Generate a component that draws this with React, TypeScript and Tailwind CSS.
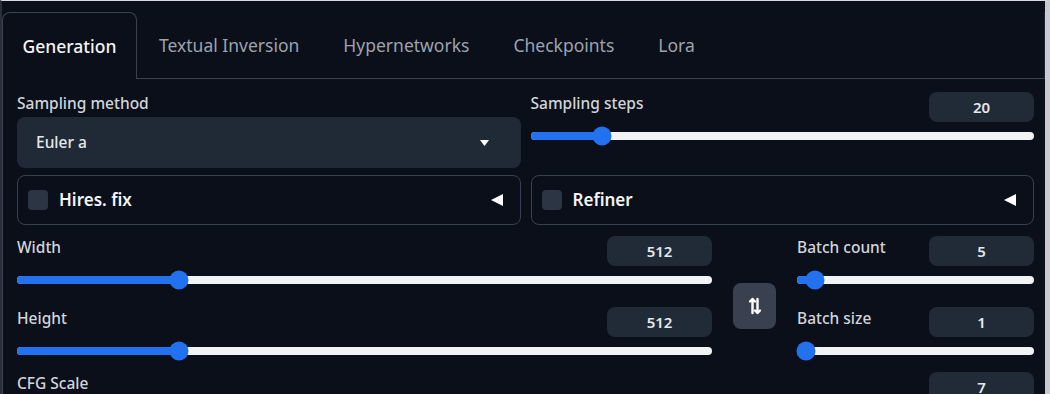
import { ReactNode } from "react";

const tabs = ["Generation", "Textual Inversion", "Hypernetworks", "Checkpoints", "Lora"];

function Slider({ frac }: { frac: number }) {
  // thumb centre sits between 9px and (width - 9px)
  const pos = `calc(9px + ${frac} * (100% - 18px))`;
  return (
    <div className="relative h-[28px] flex items-center">
      <div className="relative w-full h-[8px] rounded-full bg-[#f1f3f5]">
        <div className="absolute left-0 top-0 h-full rounded-full bg-[#2272f0]" style={{ width: pos }} />
      </div>
      <div
        className="absolute top-1/2 w-[19px] h-[19px] -translate-x-1/2 -translate-y-1/2 rounded-full bg-[#2272f0]"
        style={{ left: pos }}
      />
    </div>
  );
}

function NumBox({ value }: { value: string }) {
  return (
    <div className="w-[105px] h-[30px] rounded-lg bg-[#212a37] flex items-center justify-center text-[15px] font-semibold text-[#e5e7eb]">
      {value}
    </div>
  );
}

function Label({ children }: { children: ReactNode }) {
  return <span className="self-start pt-[1px] text-[15.5px] leading-[20px] font-medium text-[#d1d5db]">{children}</span>;
}

function SliderBlock({ label, value, frac }: { label: string; value: string; frac: number }) {
  return (
    <div>
      <div className="h-[30px] flex items-center justify-between">
        <Label>{label}</Label>
        <NumBox value={value} />
      </div>
      <Slider frac={frac} />
    </div>
  );
}

function Accordion({ label }: { label: ReactNode }) {
  return (
    <div className="h-[50px] rounded-lg border border-[#374151] flex items-center pl-[10px] pr-[16px]">
      <div className="w-[20px] h-[20px] rounded-[4px] bg-[#2c3543]" />
      <span className="ml-[11px] text-[17px] font-semibold text-[#f3f4f6]">{label}</span>
      <svg className="ml-auto" width="14" height="14" viewBox="0 0 14 14">
        <path d="M13 1 L1 7 L13 13 Z" fill="#ffffff" />
      </svg>
    </div>
  );
}

export default function App() {
  return (
    <div
      className="w-[1050px] h-[394px] overflow-hidden bg-[#0b0f19] border-t border-t-[#d9d9dc] border-l-2 border-l-[#2a2e38] border-r-[5px] border-r-[#c9cbd0]"
      style={{ fontFamily: '"Noto Sans", sans-serif' }}
    >
      <div className="h-full flex flex-col pt-[11px]">
        {/* Tabs */}
        <div className="flex h-[67px] shrink-0">
          {tabs.map((t, i) =>
            i === 0 ? (
              <div
                key={t}
                className="w-[135px] flex items-center justify-center rounded-t-lg border border-b-0 border-[#3a4150] text-[17.5px] font-medium text-[#f3f4f6]"
              >
                {t}
              </div>
            ) : (
              <div
                key={t}
                className="px-[22px] flex items-center border-b border-[#3a4150] text-[17.5px] text-[#9ca3af]"
              >
                {t}
              </div>
            )
          )}
          <div className="flex-1 border-b border-[#3a4150] border-r border-r-[#1f2430]" />
        </div>

        {/* Panel */}
        <div className="flex-1 border-l border-[#3a4150] pl-[14px] pr-[11px] pt-[13px]">
          <div className="grid grid-cols-2 gap-x-[10px]">
            <div>
              <div className="h-[25px] flex items-center">
                <Label>Sampling method</Label>
              </div>
              <div className="h-[51px] rounded-lg bg-[#202a37] flex items-center pl-[19px] pr-[32px] text-[15.5px] font-medium text-[#e5e7eb]">
                Euler a
                <svg className="ml-auto" width="9" height="6" viewBox="0 0 9 6">
                  <path d="M0 0 H9 L4.5 6 Z" fill="#ffffff" />
                </svg>
              </div>
            </div>
            <div>
              <div className="h-[30px] flex items-center justify-between">
                <Label>Sampling steps</Label>
                <NumBox value="20" />
              </div>
              <Slider frac={0.128} />
            </div>
          </div>

          <div className="grid grid-cols-2 gap-x-[10px] mt-[7px]">
            <Accordion label="Hires. fix" />
            <Accordion label="Refiner" />
          </div>

          <div className="flex mt-[11px]">
            <div className="w-[695px] flex flex-col gap-[13px]">
              <SliderBlock label="Width" value="512" frac={0.226} />
              <SliderBlock label="Height" value="512" frac={0.226} />
            </div>
            <div className="flex-1 flex items-center justify-center">
              <button className="mt-[10px] w-[43px] h-[46px] rounded-lg bg-[#394050] flex items-center justify-center">
                <svg width="12" height="18" viewBox="0 0 12 18" fill="none" stroke="#ffffff" strokeWidth="2.4" strokeLinecap="round" strokeLinejoin="round">
                  <path d="M3.5 16 V2 M1 4.5 L3.5 2 L6 4.5" />
                  <path d="M8.5 2 V16 M6 13.5 L8.5 16 L11 13.5" />
                </svg>
              </button>
            </div>
            <div className="w-[237px] flex flex-col gap-[13px]">
              <SliderBlock label="Batch count" value="5" frac={0.04} />
              <SliderBlock label="Batch size" value="1" frac={0} />
            </div>
          </div>

          <div className="mt-[7px] h-[30px] flex items-center justify-between">
            <Label>CFG Scale</Label>
            <NumBox value="7" />
          </div>
        </div>
      </div>
    </div>
  );
}
